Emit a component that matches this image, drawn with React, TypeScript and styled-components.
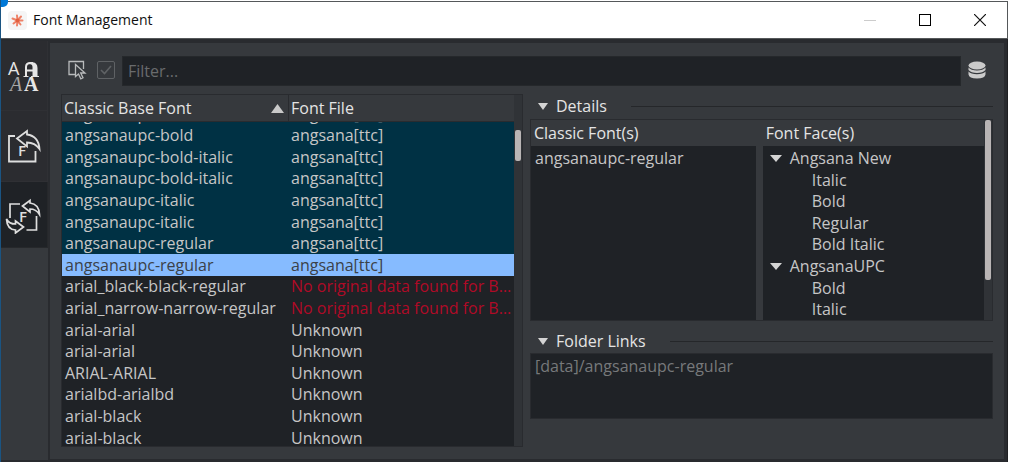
import React, { useLayoutEffect, useRef } from "react";
import styled, { createGlobalStyle, css } from "styled-components";

const color = {
  panel: "#36393d",
  edge: "#292b2f",
  tab: "#2b2c30",
  field: "#1f2226",
  text: "#c6c6c6",
  heading: "#e4e4e4",
  muted: "#77797b",
  teal: "#003144",
  selection: "#86bbff",
  error: "#b00a26",
  thumb: "#b9b5b5",
};

const GlobalStyle = createGlobalStyle`
  *, *::before, *::after { box-sizing: border-box; }
  body {
    margin: 0;
    background: #fff;
    font-family: "Open Sans", "Noto Sans", sans-serif;
    font-size: 16px;
    line-height: 20px;
    color: ${color.text};
  }
  button, input, textarea { font: inherit; color: inherit; }
  svg { display: block; flex: none; }
`;

const Window = styled.div`
  position: relative;
  display: flex;
  flex-direction: column;
  height: 100vh;
  padding-top: 1px;
  padding-right: 1px;
  border-left: 1px solid #1a5482;
  overflow: hidden;
`;

const CornerHandle = styled.span`
  position: absolute;
  top: -7px;
  left: -7px;
  width: 14px;
  height: 14px;
  border-radius: 5px;
  background: #0078d7;
`;

const TitleBar = styled.header`
  display: flex;
  align-items: center;
  flex: none;
  height: 38px;
  padding-left: 7px;
  border: 1px solid #55585a;
  border-left: 0;
  background: #fff;
  color: #101010;
`;

const Title = styled.h1`
  flex: 1;
  margin: 0 0 0 6px;
  font-size: 14px;
  font-weight: 400;
`;

const PlainButton = styled.button`
  display: flex;
  align-items: center;
  justify-content: center;
  padding: 0;
  border: 0;
  background: none;
`;

const CaptionButton = styled(PlainButton)`
  width: 55px;
  height: 36px;
`;

const Body = styled.div`
  display: flex;
  flex: 1;
  min-height: 0;
  padding: 2px 0 0;
  background: ${color.edge};
  border-right: 1px solid #1f2023;
`;

const TabRail = styled.nav`
  display: flex;
  flex-direction: column;
  flex: none;
  width: 47px;
  padding-bottom: 2px;
`;

const Tab = styled(PlainButton)<{ $active?: boolean; $height: number }>`
  flex: none;
  height: ${(p) => p.$height}px;
  border: 1px solid #2f3034;
  border-top: 0;
  border-left: 0;
  background: ${(p) => (p.$active ? color.field : color.tab)};
  padding-right: 4px;
  ${(p) => p.$active && css`border-color: #26282b;`}
`;

const RailSpace = styled.div`
  flex: 1;
  background: ${color.panel};
`;

const Panel = styled.main`
  display: flex;
  flex-direction: column;
  flex: 1;
  min-width: 0;
  margin: 2px 3px 3px 2px;
  padding: 13px 11px 12px;
  background: ${color.panel};
`;

const Toolbar = styled.div`
  display: flex;
  align-items: center;
  flex: none;
  height: 30px;
  margin-left: 7px;
  margin-bottom: 8px;
`;

const ToolGroup = styled.div`
  display: flex;
  align-items: center;
  gap: 10px;
  padding: 0 7px 2px 0;
`;

const CheckLabel = styled.label`
  position: relative;
  display: flex;
  width: 18px;
  height: 18px;
  color: #5f6265;

  input {
    appearance: none;
    width: 18px;
    height: 18px;
    margin: 0;
    border: 1px solid currentColor;
    border-radius: 2px;
  }
  svg {
    position: absolute;
    inset: 0;
  }
`;

const FilterInput = styled.input`
  flex: 1;
  min-width: 0;
  height: 30px;
  padding: 0 5px;
  border: 1px solid #25282b;
  background: ${color.field};
  outline: 0;
  &::placeholder { color: #696b6d; opacity: 1; }
`;

const DatabaseButton = styled(PlainButton)`
  width: 32px;
  height: 30px;
  padding-bottom: 2px;
`;

const Columns = styled.div`
  display: flex;
  flex: 1;
  gap: 7px;
  min-height: 0;
`;

const FontList = styled.section`
  display: flex;
  flex: 0 0 calc(50% - 4px);
  min-width: 0;
  border: 1px solid ${color.edge};
  background: ${color.field};
`;

const DetailColumn = styled.section`
  flex: 1;
  min-width: 0;
`;

const Scroller = styled.div`
  flex: 1;
  min-width: 0;
  overflow: hidden;
`;

const Track = styled.div<{ $offset: number }>`
  flex: none;
  width: 8px;
  padding: ${(p) => p.$offset}px 1px 0;
  background: #303337;
`;

const Thumb = styled.div<{ $size: string }>`
  height: ${(p) => p.$size};
  border-radius: 2px;
  background: ${color.thumb};
`;

const rowRhythm = css`
  height: 22px;
  &:nth-child(5n + 2), &:nth-child(5n + 4) { height: 21px; }
`;

const FontTable = styled.table`
  width: 100%;
  table-layout: fixed;
  border-collapse: separate;
  border-spacing: 0;
`;

const HeadCell = styled.th`
  position: sticky;
  top: 0;
  height: 27px;
  padding: 0 4px 0 2px;
  border-bottom: 1px solid ${color.edge};
  background: ${color.panel};
  color: ${color.heading};
  font-weight: 400;
  text-align: left;
  & + & { border-left: 1px solid ${color.edge}; }
`;

const HeadContent = styled.span`
  display: flex;
  align-items: center;
  justify-content: space-between;
`;

type Tone = "teal" | "selected" | "plain";

const FontRow = styled.tr<{ $tone: Tone }>`
  ${rowRhythm}
  background: ${(p) =>
    p.$tone === "teal" ? color.teal : p.$tone === "selected" ? color.selection : color.field};
  color: ${(p) => (p.$tone === "selected" ? "#3b4148" : color.text)};
`;

const Cell = styled.td<{ $error?: boolean }>`
  padding: 0 1px 1px 3px;
  overflow: hidden;
  white-space: nowrap;
  text-overflow: ellipsis;
  ${(p) => p.$error && css`color: ${color.error};`}
`;

const SectionHeader = styled.div`
  display: flex;
  align-items: center;
  height: 24px;
  &::after {
    content: "";
    flex: 1;
    margin-left: 24px;
    border-top: 1px solid #25272a;
  }
`;

const SectionToggle = styled(PlainButton)`
  gap: 8px;
  padding-left: 8px;
  color: ${color.heading};
`;

const DetailBox = styled.div`
  display: flex;
  border: 1px solid ${color.edge};
  height: 202px;
  background: ${color.panel};
  margin: 1px 0 8px;
`;

const DetailPane = styled.div`
  display: flex;
  flex-direction: column;
  flex: 1;
  min-width: 0;
  & + & { margin-left: 7px; flex: 0 0 48%; }
`;

const PaneTitle = styled.h2`
  flex: none;
  height: 26px;
  margin: 0;
  padding: 3px;
  color: ${color.heading};
  font-size: 16px;
  font-weight: 400;
`;

const PaneList = styled.ul`
  flex: 1;
  min-height: 0;
  margin: 0;
  padding: 1px 0 0;
  overflow: hidden;
  list-style: none;
  background: ${color.field};
`;

const PaneItem = styled.li<{ $level?: "family" | "face" }>`
  ${rowRhythm}
  display: flex;
  align-items: center;
  gap: 8px;
  padding-left: ${(p) => (p.$level === "family" ? 7 : p.$level === "face" ? 49 : 4)}px;
`;

const FolderField = styled.textarea`
  display: block;
  width: 100%;
  height: 66px;
  padding: 2px 4px;
  border: 1px solid ${color.edge};
  background: ${color.field};
  color: ${color.muted};
  resize: none;
  outline: 0;
`;

const DownArrow = ({ size }: { size: number }) => (
  <svg width={size} height="7" viewBox="0 0 12 8" preserveAspectRatio="none" aria-hidden="true">
    <path d="M0 0H12L6 8Z" fill="#d4d4d4" />
  </svg>
);

const AppLogo = () => (
  <svg width="19" height="19" viewBox="0 0 19 19" aria-hidden="true">
    <rect width="19" height="19" rx="4" fill="#f5f5f5" />
    <g stroke="#ee8268" strokeWidth="2" strokeLinecap="round">
      <path d="M9.5 9.5L9 4.500M9.5 9.5L13 5.500M9.5 9.5L14.500 9.500M9.5 9.5L12.500 13.500M9.5 9.500L9 14.500M9.500 9.500L5.500 12.500M9.500 9.500L4.500 7.500" />
    </g>
    <circle cx="9.5" cy="9.5" r="2" fill="#e2603f" />
  </svg>
);

const GlyphsIcon = () => (
  <svg width="38" height="46" viewBox="0 -3 38 46" fill="#e6e6e6" aria-hidden="true">
    <text x="5" y="19" fontFamily="Open Sans" fontSize="18">A</text>
    <path d="M23 20V11Q23 7 27.500 7H30M23 14.500H31" fill="none" stroke="#e6e6e6" strokeWidth="2" />
    <path d="M26 6.500Q34.500 5 34.500 12V20H29.500V11Q29.500 8 26 8Z" />
    <path d="M20.500 20.500H25.500M28 20.500H36" stroke="#e6e6e6" />
    <text x="7" y="35" fontFamily="Liberation Serif" fontStyle="italic" fontSize="20" fill="#a8a8a8">A</text>
    <text x="21" y="35" fontFamily="Liberation Serif" fontWeight="700" fontSize="20">A</text>
  </svg>
);

const ExportIcon = () => (
  <svg width="38" height="36" viewBox="0 0 38 36" fill="none" stroke="#dedede" strokeWidth="1.8" aria-hidden="true">
    <path d="M12 8H6V33.500H32.500V23" />
    <path d="M14 10.500L24 3V6.500Q35.500 8 36.500 21Q32 14.500 24 14.500V18.500Z" />
    <text x="15" y="28" fontFamily="Open Sans" fontWeight="600" fontSize="15" fill="#dedede" stroke="none">F</text>
  </svg>
);

const SwapIcon = () => (
  <svg width="38" height="38" viewBox="0 0 38 38" fill="none" stroke="#dedede" strokeWidth="1.7" aria-hidden="true">
    <path d="M17 8H7V22M23.500 34H33.500V20" />
    <path d="M19.500 10L27 4.500V7Q36 8 36.500 18.500Q33 13 27 13V16Z" />
    <path d="M20.500 31L12.500 25V28Q6 28 3.500 23Q4 33.500 12.500 34V37Z" />
    <text x="16" y="26" fontFamily="Open Sans" fontWeight="600" fontSize="15" fill="#dedede" stroke="none">F</text>
  </svg>
);

const PickIcon = () => (
  <svg width="19" height="20" viewBox="0 0 19 20" fill="none" stroke="#b9bbbc" strokeWidth="1.3" aria-hidden="true">
    <path d="M7 14.500H1V1.500H15.500V9" />
    <path d="M7.500 4.500V16.500L10.500 14L12.800 18.800L15 17.800L12.700 13H17Z" fill="#36393d" />
  </svg>
);

const DatabaseIcon = () => (
  <svg width="18" height="18" viewBox="0 0 18 18" fill="#cbcbcb" aria-hidden="true">
    <ellipse cx="9" cy="4.500" rx="8.500" ry="4" />
    <path d="M.5 6.500Q3 9.500 9 9.500T17.500 6.500V9Q15 12 9 12T.5 9Z" />
    <path d="M.5 10.500Q3 13.200 9 13.200T17.500 10.500V13.500Q17 17.500 9 17.500T.5 13.500Z" />
  </svg>
);

interface FontEntry {
  name: string;
  file: string;
  tone: Tone;
  error?: boolean;
}

const MISSING = "No original data found for BaseFont";

const fonts: FontEntry[] = [
  { name: "angsanaupc-bold", file: "angsana[ttc]", tone: "teal" },
  { name: "angsanaupc-bold", file: "angsana[ttc]", tone: "teal" },
  { name: "angsanaupc-bold-italic", file: "angsana[ttc]", tone: "teal" },
  { name: "angsanaupc-bold-italic", file: "angsana[ttc]", tone: "teal" },
  { name: "angsanaupc-italic", file: "angsana[ttc]", tone: "teal" },
  { name: "angsanaupc-italic", file: "angsana[ttc]", tone: "teal" },
  { name: "angsanaupc-regular", file: "angsana[ttc]", tone: "teal" },
  { name: "angsanaupc-regular", file: "angsana[ttc]", tone: "selected" },
  { name: "arial_black-black-regular", file: MISSING, tone: "plain", error: true },
  { name: "arial_narrow-narrow-regular", file: MISSING, tone: "plain", error: true },
  { name: "arial-arial", file: "Unknown", tone: "plain" },
  { name: "arial-arial", file: "Unknown", tone: "plain" },
  { name: "ARIAL-ARIAL", file: "Unknown", tone: "plain" },
  { name: "arialbd-arialbd", file: "Unknown", tone: "plain" },
  { name: "arial-black", file: "Unknown", tone: "plain" },
  { name: "arial-black", file: "Unknown", tone: "plain" },
];

const faces: { label: string; level: "family" | "face" }[] = [
  { label: "Angsana New", level: "family" },
  { label: "Italic", level: "face" },
  { label: "Bold", level: "face" },
  { label: "Regular", level: "face" },
  { label: "Bold Italic", level: "face" },
  { label: "AngsanaUPC", level: "family" },
  { label: "Bold", level: "face" },
  { label: "Italic", level: "face" },
];

const INITIAL_SCROLL = 19;

export default function App() {
  const scroller = useRef<HTMLDivElement>(null);

  useLayoutEffect(() => {
    if (scroller.current) scroller.current.scrollTop = INITIAL_SCROLL;
  }, []);

  return (
    <>
      <GlobalStyle />
      <Window>
        <TitleBar>
          <AppLogo />
          <Title>Font Management</Title>
          <CaptionButton aria-label="Minimize">
            <svg width="12" height="12"><path d="M0 6.500H12" stroke="#ccc" /></svg>
          </CaptionButton>
          <CaptionButton aria-label="Maximize">
            <svg width="12" height="12"><rect x=".5" y=".5" width="11" height="11" fill="none" stroke="#000" /></svg>
          </CaptionButton>
          <CaptionButton aria-label="Close">
            <svg width="12" height="12"><path d="M0 0L12 12M12 0L0 12" stroke="#111" strokeWidth="1.2" /></svg>
          </CaptionButton>
        </TitleBar>
        <Body>
          <TabRail aria-label="Views">
            <Tab $height={70} aria-label="Fonts"><GlyphsIcon /></Tab>
            <Tab $height={71} aria-label="Export fonts"><ExportIcon /></Tab>
            <Tab $height={66} $active aria-label="Replace fonts"><SwapIcon /></Tab>
            <RailSpace />
          </TabRail>
          <Panel>
            <Toolbar>
              <ToolGroup>
                <PlainButton aria-label="Pick font"><PickIcon /></PlainButton>
                <CheckLabel>
                  <input type="checkbox" aria-label="Enable filter" defaultChecked />
                  <svg width="18" height="18" fill="none" stroke="currentColor" strokeWidth="1.600">
                    <path d="M4 9L7.500 12.500L14 5" />
                  </svg>
                </CheckLabel>
              </ToolGroup>
              <FilterInput aria-label="Filter" placeholder="Filter..." />
              <DatabaseButton aria-label="Database"><DatabaseIcon /></DatabaseButton>
            </Toolbar>
            <Columns>
              <FontList>
                <Scroller ref={scroller}>
                  <FontTable>
                    <thead>
                      <tr>
                        <HeadCell>
                          <HeadContent>
                            Classic Base Font
                            <svg width="13" height="9" aria-hidden="true">
                              <path d="M0 9H13L6.500 0Z" fill="#c9c9c9" />
                            </svg>
                          </HeadContent>
                        </HeadCell>
                        <HeadCell>Font File</HeadCell>
                      </tr>
                    </thead>
                    <tbody>
                      {fonts.map((font, i) => (
                        <FontRow key={i} $tone={font.tone}>
                          <Cell>{font.name}</Cell>
                          <Cell $error={font.error}>{font.file}</Cell>
                        </FontRow>
                      ))}
                    </tbody>
                  </FontTable>
                </Scroller>
                <Track $offset={35}><Thumb $size="31px" /></Track>
              </FontList>
              <DetailColumn>
                <SectionHeader>
                  <SectionToggle aria-expanded="true"><DownArrow size={10} />Details</SectionToggle>
                </SectionHeader>
                <DetailBox>
                  <DetailPane>
                    <PaneTitle>Classic Font(s)</PaneTitle>
                    <PaneList><PaneItem>angsanaupc-regular</PaneItem></PaneList>
                  </DetailPane>
                  <DetailPane>
                    <PaneTitle>Font Face(s)</PaneTitle>
                    <PaneList>
                      {faces.map((face, i) => (
                        <PaneItem key={i} $level={face.level}>
                          {face.level === "family" && <DownArrow size={12} />}
                          {face.label}
                        </PaneItem>
                      ))}
                    </PaneList>
                  </DetailPane>
                  <Track $offset={0}><Thumb $size="80%" /></Track>
                </DetailBox>
                <SectionHeader>
                  <SectionToggle aria-expanded="true"><DownArrow size={10} />Folder Links</SectionToggle>
                </SectionHeader>
                <FolderField aria-label="Folder links" readOnly value="[data]/angsanaupc-regular" />
              </DetailColumn>
            </Columns>
          </Panel>
        </Body>
        <CornerHandle />
      </Window>
    </>
  );
}
